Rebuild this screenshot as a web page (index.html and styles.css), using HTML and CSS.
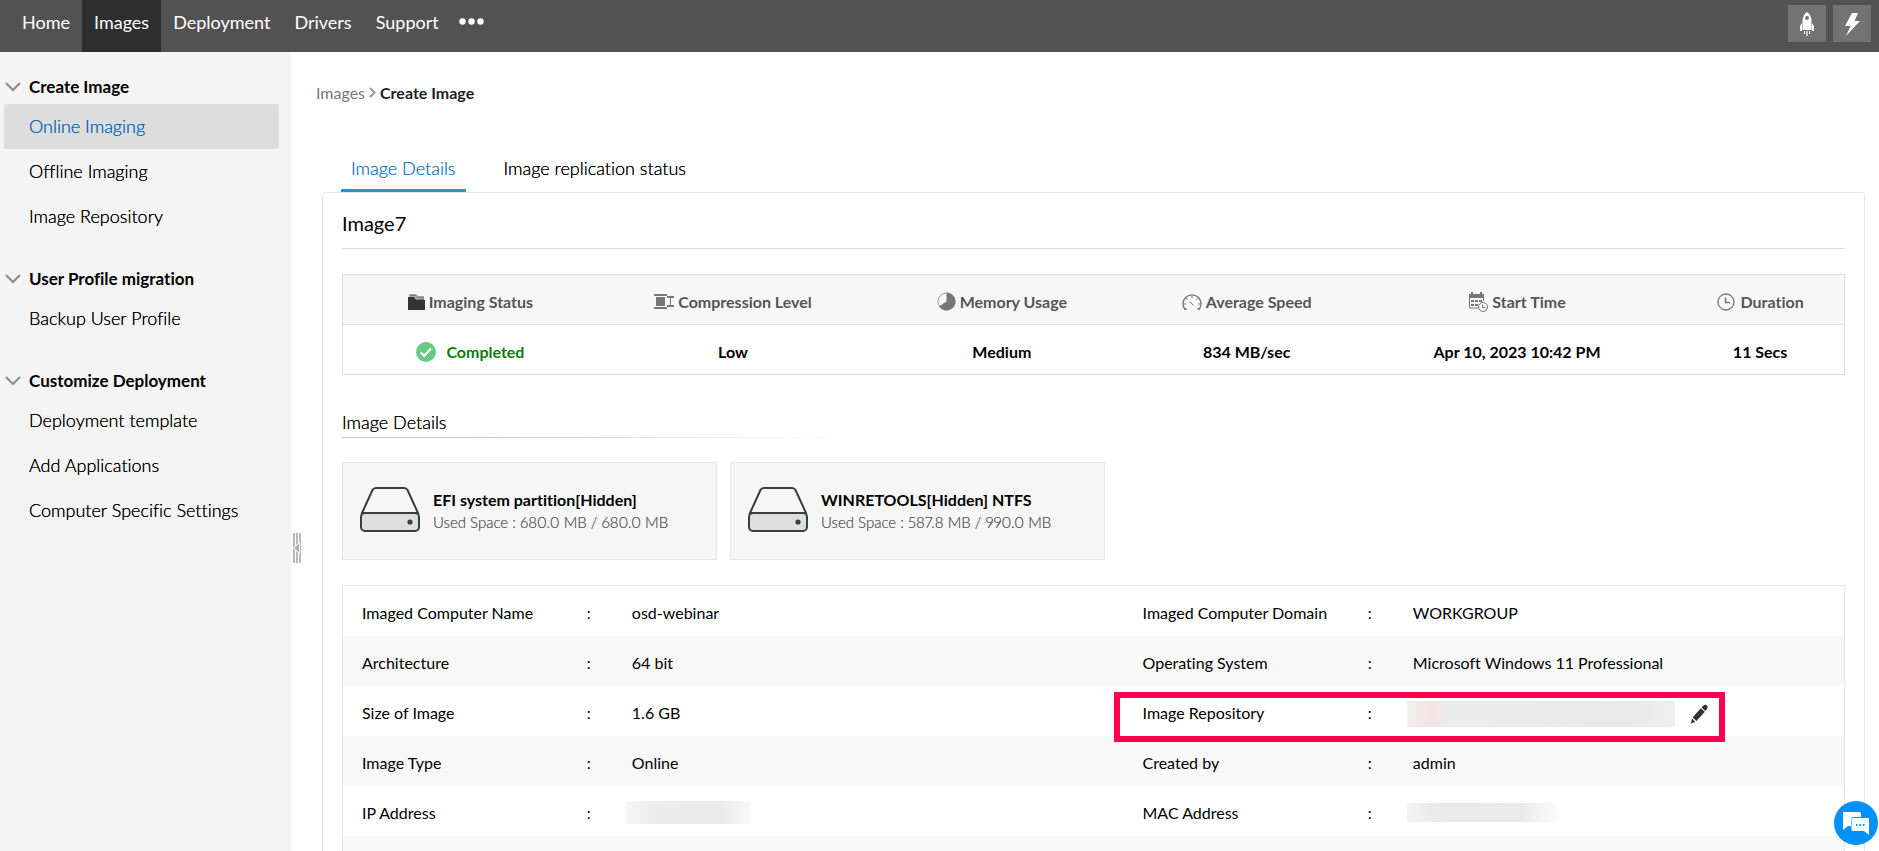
FILE: index.html
```html
<!DOCTYPE html>
<html lang="en">
<head>
  <meta charset="UTF-8">
  <meta name="viewport" content="width=device-width, initial-scale=1">
  <title>Create Image</title>
  <link rel="stylesheet" href="styles.css">
</head>
<body>

<header class="topbar">
  <nav class="topnav">
    <a href="#">Home</a>
    <a href="#" class="active">Images</a>
    <a href="#">Deployment</a>
    <a href="#">Drivers</a>
    <a href="#">Support</a>
    <button class="more" aria-label="More">
      <svg width="25" height="7" viewBox="0 0 25 7" fill="#fff"><circle cx="3.5" cy="3.5" r="3.2"/><circle cx="12.5" cy="3.5" r="3.2"/><circle cx="21.5" cy="3.5" r="3.2"/></svg>
    </button>
  </nav>
  <div class="tools">
    <button class="tool" aria-label="Quick launch">
      <svg width="16" height="26" viewBox="0 0 16 26" fill="#fff">
        <path fill-rule="evenodd" d="M8 1C5 3 3.500 6 3.500 10v9h9v-9C12.500 6 11 3 8 1zM8 5a2 2 0 1 1 0 4 2 2 0 0 1 0-4z"/>
        <path d="M3 12L1 15v5h2zM13 12l2 3v5h-2z"/>
        <path d="M5 20h1v3H5zM10 20h1v3h-1z"/><path fill="#ccc" d="M7 20h2v5H7z"/>
      </svg>
    </button>
    <button class="tool" aria-label="Quick actions">
      <svg width="16" height="26" viewBox="0 0 16 26" fill="#fff"><path d="M8 2h6l-3.500 8H16L2 25l4.500-10H1z"/></svg>
    </button>
  </div>
</header>

<div class="layout">
  <aside class="sidebar">
    <section class="group">
      <h2><svg width="16" height="10" viewBox="0 0 16 10"><path d="M1 1l7 7 7-7"/></svg>Create Image</h2>
      <a href="#" class="active">Online Imaging</a>
      <a href="#">Offline Imaging</a>
      <a href="#">Image Repository</a>
    </section>
    <section class="group">
      <h2><svg width="16" height="10" viewBox="0 0 16 10"><path d="M1 1l7 7 7-7"/></svg>User Profile migration</h2>
      <a href="#">Backup User Profile</a>
    </section>
    <section class="group">
      <h2><svg width="16" height="10" viewBox="0 0 16 10"><path d="M1 1l7 7 7-7"/></svg>Customize Deployment</h2>
      <a href="#">Deployment template</a>
      <a href="#">Add Applications</a>
      <a href="#">Computer Specific Settings</a>
    </section>
    <button class="collapse" aria-label="Collapse menu">
      <svg width="8" height="30" viewBox="0 0 8 30"><path fill="#b9b9b9" d="M0 0h2v30H0zM3 0h2v30H3zM6 0h2v30H6z"/><path fill="#b0b0b0" stroke="#fff" d="M.5 15L6.500 9.500v11z"/></svg>
    </button>
  </aside>

  <main class="main">
    <nav class="breadcrumb">
      <a href="#">Images</a>
      <svg width="7" height="12" viewBox="0 0 7 12"><path d="M1 1l4.500 4.500L1 10"/></svg>
      <strong>Create Image</strong>
    </nav>

    <div class="tabs">
      <button class="tab active">Image Details</button>
      <button class="tab">Image replication status</button>
    </div>

    <div class="panel">
      <h1>Image7</h1>

      <table class="summary">
        <colgroup><col class="c-status"><col class="c-level"><col class="c-memory"><col class="c-speed"><col class="c-start"><col class="c-duration"></colgroup>
        <thead>
          <tr>
            <th><span class="head"><svg width="17" height="18" viewBox="0 0 17 18"><path fill="#aaa" d="M1 1h7l2 2h6v5H1z"/><path fill="#333" d="M0 4h6l2 3h9v10H0z"/><path stroke="#777" fill="none" d="M3 2.500h5l2 2h6M8 5.500l1.500 1H16"/></svg>Imaging Status</span></th>
            <th><span class="head"><svg width="20" height="18" viewBox="0 0 20 18" fill="#777"><path d="M0 1h13v2H0zM0 14h13v2H0zM2 4h9v9H2zM13 3h7v2h-7zM13 12h7v2h-7zM16 5h1v7h-1z"/></svg>Compression Level</span></th>
            <th><span class="head"><svg width="19" height="19" viewBox="0 0 19 19"><circle cx="9.500" cy="9.500" r="8.500" fill="#f7f7f7" stroke="#999"/><path fill="#777" d="M9.500 9.500V.5a9 9 0 1 1-7.500 14z"/></svg>Memory Usage</span></th>
            <th><span class="head"><svg width="20" height="18" viewBox="0 0 20 18" fill="none" stroke="#777"><path stroke-width="1.300" d="M5 15.500l-2 1A9 9 0 1 1 17 16.500l-2-1"/><path d="M10 2v3M3.500 5l2 1.500M16.500 5l-2 1.500M1 11h3M19 11h-3M7.500 8.500l4 4"/></svg>Average Speed</span></th>
            <th><span class="head"><svg width="20" height="20" viewBox="0 0 20 20"><path fill="#777" d="M1 2h15v4H1zM3 0h2v3H3zM12 0h2v3h-2z"/><path fill="none" stroke="#777" d="M1.500 5v11h9M15.500 5v4"/><path fill="#777" d="M3 8h3v2H3zM7 8h3v2H7zM11 8h3v2h-3zM3 12h3v2H3zM7 12h3v2H7z"/><circle cx="15" cy="15" r="4.500" fill="#f7f7f7" stroke="#777"/><path fill="none" stroke="#777" d="M14.500 12.500v3H17"/></svg>Start Time</span></th>
            <th><span class="head wide"><svg width="18" height="18" viewBox="0 0 18 18" fill="none" stroke="#777" stroke-width="1.300"><circle cx="9" cy="9" r="8"/><path stroke-width="1.600" d="M8.500 4.500v5H13"/></svg>Duration</span></th>
          </tr>
        </thead>
        <tbody>
          <tr>
            <td><span class="done"><svg width="20" height="20" viewBox="0 0 20 20"><circle cx="10" cy="10" r="10" fill="#67c983"/><path fill="none" stroke="#fff" stroke-width="2.200" d="M4.800 10.500l3.400 3.400L15 6.500"/></svg>Completed</span></td>
            <td>Low</td>
            <td>Medium</td>
            <td>834 MB/sec</td>
            <td>Apr 10, 2023 10:42 PM</td>
            <td>11 Secs</td>
          </tr>
        </tbody>
      </table>

      <h3>Image Details</h3>

      <div class="disks">
        <div class="disk">
          <svg width="60" height="47" viewBox="0 0 60 47"><path fill="#f6f6f6" stroke="#363f44" stroke-width="2" d="M2 27L12.500 4Q13.500 2 16 2h28q2.500 0 3.500 2L58 27z"/><rect x="1" y="27" width="58" height="18" rx="4" fill="#dedede" stroke="#363f44" stroke-width="2"/><circle cx="50" cy="36" r="2.600" fill="#363f44"/></svg>
          <div>
            <strong>EFI system partition[Hidden]</strong>
            <p>Used Space : 680.0 MB / 680.0 MB</p>
          </div>
        </div>
        <div class="disk">
          <svg width="60" height="47" viewBox="0 0 60 47"><path fill="#f6f6f6" stroke="#363f44" stroke-width="2" d="M2 27L12.500 4Q13.500 2 16 2h28q2.500 0 3.500 2L58 27z"/><rect x="1" y="27" width="58" height="18" rx="4" fill="#dedede" stroke="#363f44" stroke-width="2"/><circle cx="50" cy="36" r="2.600" fill="#363f44"/></svg>
          <div>
            <strong>WINRETOOLS[Hidden] NTFS</strong>
            <p>Used Space : 587.8 MB / 990.0 MB</p>
          </div>
        </div>
      </div>

      <table class="details">
        <colgroup><col class="c-label"><col class="c-colon"><col class="c-value"><col class="c-label"><col class="c-colon"><col></colgroup>
        <tr>
          <td>Imaged Computer Name</td><td>:</td><td>osd-webinar</td>
          <td>Imaged Computer Domain</td><td>:</td><td>WORKGROUP</td>
        </tr>
        <tr>
          <td>Architecture</td><td>:</td><td>64 bit</td>
          <td>Operating System</td><td>:</td><td>Microsoft Windows 11 Professional</td>
        </tr>
        <tr>
          <td>Size of Image</td><td>:</td><td>1.6 GB</td>
          <td class="marked"><span class="marker"></span>Image Repository</td><td>:</td>
          <td>
            <div class="repo">
              <span class="masked masked-repo"></span>
              <button class="edit" aria-label="Edit repository">
                <svg width="18" height="20" viewBox="0 0 18 20" fill="#333"><path d="M13 2Q15 0 16.700 1.300T17 5L15.500 7 11.500 3.500zM10.800 4.300l4 3.500L6.500 17 2.500 13.500zM1.800 14.500L5.300 17.700 1 19.500z"/></svg>
              </button>
            </div>
          </td>
        </tr>
        <tr>
          <td>Image Type</td><td>:</td><td>Online</td>
          <td>Created by</td><td>:</td><td>admin</td>
        </tr>
        <tr>
          <td>IP Address</td><td>:</td><td><span class="masked masked-ip"></span></td>
          <td>MAC Address</td><td>:</td><td><span class="masked masked-mac"></span></td>
        </tr>
        <tr>
          <td></td><td></td><td></td><td></td><td></td><td></td>
        </tr>
      </table>
    </div>
  </main>
</div>

<button class="chat" aria-label="Chat">
  <svg width="28" height="24" viewBox="0 0 28 24"><path fill="#fff" d="M2 1h15q2 0 2 2v3h-7q-3 0-3 3v6H6l-5 4V2q0-1 1-1z"/><path fill="#fff" d="M11 7h15q1 0 1 1v16l-5-4H11q-1.500 0-1.500-1.500v-10Q9.500 7 11 7z"/><path fill="#0091ff" d="M14 13h1.500v2H14zM17.500 13H19v2h-1.500zM21 13h1.500v2H21z"/></svg>
</button>

</body>
</html>
```
FILE: styles.css
```css
* {
  box-sizing: border-box;
}
body {
  margin: 0;
  height: 100vh;
  display: flex;
  flex-direction: column;
  overflow: hidden;
  font-family: Lato, "Liberation Sans", sans-serif;
  font-size: 16px;
  font-variant-ligatures: no-common-ligatures;
  color: #000;
  background-color: #fff;
}
a {
  color: inherit;
  text-decoration: none;
}
button {
  font: inherit;
  font-variant-ligatures: inherit;
  color: inherit;
  padding: 0;
  border: none;
  background: none;
  cursor: pointer;
}
svg {
  display: block;
  flex-shrink: 0;
}

/* top bar */
.topbar {
  flex-shrink: 0;
  height: 52px;
  display: flex;
  justify-content: space-between;
  background-color: #525252;
  color: #fff;
}
.topnav {
  display: flex;
  padding-left: 10px;
  font-size: 18px;
  line-height: 44px;
}
.topnav a {
  padding: 0 12px;
}
.topnav .active {
  background-color: #2e2e2e;
}
.more {
  height: 42px;
  padding: 0 8px;
}
.tools {
  display: flex;
  gap: 7px;
  padding: 5px 8px;
}
.tool {
  width: 38px;
  height: 37px;
  display: flex;
  align-items: center;
  justify-content: center;
  background-color: #737373;
}

.layout {
  flex: 1;
  min-height: 0;
  display: flex;
}

/* left menu */
.sidebar {
  position: relative;
  flex-shrink: 0;
  width: 291px;
  padding: 20px 12px 0 4px;
  background-color: #f4f4f4;
  font-size: 18px;
}
.group {
  margin-bottom: 25px;
}
.group h2 {
  display: flex;
  align-items: center;
  gap: 8px;
  margin: 0;
  padding: 0 0 2px 1px;
  font-size: 17px;
  font-weight: 700;
  line-height: 30px;
}
.group h2 svg {
  fill: none;
  stroke: #8c8c8c;
  stroke-width: 2;
}
.group a {
  display: block;
  padding-left: 25px;
  border-radius: 3px;
  line-height: 45px;
}
.group .active {
  background-color: #ddd;
  color: #0b6db7;
}
/* light weight, darkened a little */
.group a,
.tab,
.panel h3,
.disk p {
  font-weight: 300;
  text-shadow: 0 0 0 currentColor;
}
.collapse {
  position: absolute;
  top: 481px;
  right: -10px;
}

/* content */
.main {
  flex: 1;
  min-width: 0;
  overflow-y: auto;
  scrollbar-width: none;
  padding: 28px 14px 40px 31px;
}
.breadcrumb {
  display: flex;
  align-items: center;
  gap: 4px;
  margin-left: -6px;
  line-height: 26px;
  color: #777;
}
.breadcrumb svg {
  fill: none;
  stroke: #999;
  stroke-width: 2;
}
.breadcrumb strong {
  color: #222;
}
.tabs {
  display: flex;
  gap: 28px;
  padding: 38px 19px 0;
  font-size: 18px;
}
.tab {
  height: 48px;
  padding: 2px 10px 0;
  border-bottom: 3px solid transparent;
}
.tab.active {
  color: #1d7fcd;
  border-bottom-color: #2b8fdb;
}
.panel {
  padding: 10px 19px 40px;
  border: 1px solid #e6e6e6;
  border-radius: 3px;
}
.panel h1 {
  margin: 0 0 25px;
  padding-bottom: 4px;
  border-bottom: 1px solid #ddd;
  font-size: 20px;
  font-weight: 400;
  line-height: 41px;
}

/* imaging summary */
.summary {
  width: 100%;
  table-layout: fixed;
  border-collapse: collapse;
  border: 1px solid #ddd;
  text-align: center;
}
.c-status { width: 17%; }
.c-level { width: 18%; }
.c-memory { width: 17.8%; }
.c-speed { width: 14.8%; }
.c-start { width: 21.2%; }
.c-duration { width: 11.2%; }
.summary th,
.summary td {
  height: 50px;
  padding: 4px 0 0;
  border-bottom: 1px solid #ddd;
  font-weight: 700;
}
.summary th {
  background-color: #f7f7f7;
  color: #555;
}
.head,
.done {
  display: flex;
  align-items: center;
  justify-content: center;
  gap: 4px;
}
.head.wide {
  gap: 6px;
}
.done {
  gap: 10px;
  color: #088008;
}

.panel h3 {
  margin: 34px 0 24px;
  padding-bottom: 3px;
  font-size: 18px;
  line-height: 26px;
  background: linear-gradient(to right, #ccc 25%, #fff) left bottom / 526px 1px no-repeat;
}

/* disks */
.disks {
  display: flex;
  gap: 13px;
}
.disk {
  width: 375px;
  height: 98px;
  display: flex;
  align-items: center;
  gap: 13px;
  padding-left: 17px;
  border: 1px solid #e6e6e6;
  background-color: #f6f6f6;
}
.disk svg {
  margin-bottom: 4px;
}
.disk strong {
  display: block;
  line-height: 22px;
}
.disk p {
  margin: 0;
  line-height: 22px;
  font-size: 15px;
  font-variant-numeric: proportional-nums;
  color: #666;
}

/* image properties */
.details {
  width: 100%;
  margin-top: 25px;
  table-layout: fixed;
  border-collapse: collapse;
  border: 1px solid #e6e6e6;
}
.c-label { width: 15%; }
.c-colon { width: 3%; }
.c-value { width: 34%; }
.details td {
  height: 50px;
  padding: 4px 0 0 19px;
}
.details tr:nth-child(even) {
  background-color: #f8f8f8;
}
.marked {
  position: relative;
}
.marker {
  position: absolute;
  top: 6px;
  left: -10px;
  width: 611px;
  height: 50px;
  border: 6px solid #ff004f;
  pointer-events: none;
}
.repo {
  display: flex;
  align-items: center;
  gap: 15px;
  padding-top: 2px;
}
.masked {
  display: block;
  margin-left: -6px;
}
.masked-repo {
  width: 268px;
  height: 26px;
  background: linear-gradient(to right, #f1efef, #f3e3e3 9%, #ececec 15%, #e9e9e9 80%, #eee);
}
.masked-ip {
  width: 124px;
  height: 23px;
  background: linear-gradient(to right, #f6f6f6, #ececec 25%, #eaeaea 75%, #f8f8f8);
}
.masked-mac {
  width: 150px;
  height: 19px;
  background: linear-gradient(to right, #f4f4f4, #e9e9e9 20%, #eaeaea 75%, #fbfbfb);
}

.chat {
  position: fixed;
  right: 1px;
  bottom: 6px;
  width: 44px;
  height: 44px;
  display: flex;
  align-items: center;
  justify-content: center;
  border-radius: 50%;
  background-color: #0091ff;
}
```
